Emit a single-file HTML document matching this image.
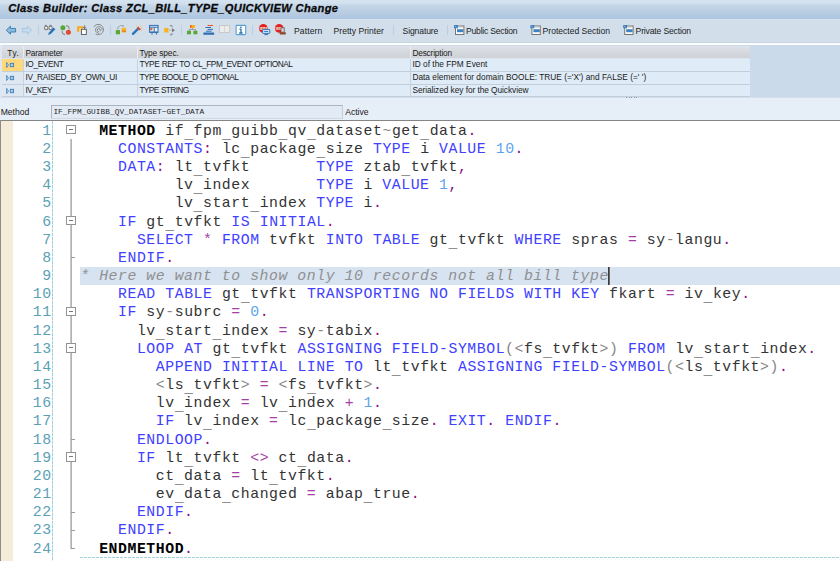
<!DOCTYPE html>
<html lang="en">
<head>
<meta charset="utf-8">
<title>Class Builder: Class ZCL_BILL_TYPE_QUICKVIEW Change</title>
<style>
*{box-sizing:border-box;margin:0;padding:0}
html,body{width:840px;height:561px;overflow:hidden;background:#e6eef7}
body{position:relative;font-family:"Liberation Sans",sans-serif;font-size:8.6px;color:#1a1a1a}
i{font-style:normal;display:block}
.abs{position:absolute}
#title{position:absolute;left:0;top:0;width:840px;height:19px;background:linear-gradient(#d6e4f1 0,#d1e0ee 18%,#c4d5e7 30%,#b7cce2 70%,#abc4de 100%)}
#title span{position:absolute;left:8.2px;top:0px;font:italic bold 11.1px/16px "Liberation Sans",sans-serif;color:#0a0a0a;white-space:nowrap;-webkit-text-stroke:0.3px #0a0a0a}
#tb{position:absolute;left:0;top:19px;width:840px;height:24px;background:#d2dfeb;border-top:1px solid #d9e4ef;border-bottom:1px solid #c8d5e3}
#tb2{position:absolute;left:0;top:43px;width:840px;height:3px;background:linear-gradient(#f4f8fc 0,#fdfeff 33%,#fdfeff 66%,#e3ebf4 67%,#d4e0ed 100%)}
.sep{position:absolute;top:25px;width:1px;height:10px;background:#bbcfe4}
.tl{position:absolute;top:24.6px;font-size:8.6px;line-height:12px;white-space:nowrap;color:#1c1c1c}
/* table */
#tbl{position:absolute;left:0;top:45px;width:840px;height:52px;background:#cbdaea}
#tbl::after{content:"";position:absolute;left:0;top:52px;width:840px;height:1px;background:#d3deea}
#tblL{position:absolute;left:0;top:45px;width:2px;height:52px;background:#dfe8f2}
.th,.td{position:absolute;white-space:nowrap;overflow:hidden;font-size:8.3px;color:#1a1a1a}
.th{top:1px;height:13px;line-height:13.4px;background:linear-gradient(#dfe2e6,#d3d7dc 60%,#cfd3d9);border-left:1px solid #e9edf1;border-bottom:1px solid #dde4ec}
.td{height:13px;line-height:11.2px;background:#dfebf6;border-left:1px solid #c6d2df;border-bottom:1px solid #c2cedc}
.td.c0{background:#dde8f3;border-left:0}
.th.c0{border-left:0}
.td.sel{background:#ffd87c}
.c0{left:2px;width:21.4px}.c1{left:23.4px;width:114px}.c2{left:137.4px;width:273px}.c3{left:410.4px;width:339.6px}
.c1 span,.c2 span,.c3 span{position:absolute;left:1.0px;top:0}
.td.c1 span,.td.c2 span{word-spacing:0.7px}
#h0{position:absolute;left:5.3px;top:0}
.th span{margin-top:1px}
.r1{top:14px}.r2{top:27px}.r3{top:40px;height:12px}
.ty{position:absolute;left:4.2px;top:2.2px;width:9px;height:8px}
#grip{position:absolute;left:626px;top:97.4px;width:13px;height:1px;background:repeating-linear-gradient(90deg,#8a96a4 0,#8a96a4 1px,transparent 1px,transparent 2.6px)}
/* method row */
#mlabel{position:absolute;left:0.7px;top:106px;font-size:8.6px;line-height:12px;white-space:nowrap}
#mfield{position:absolute;left:51px;top:105px;width:292px;height:13.6px;background:#e2ebf5;border:1px solid #aab4c0;border-right-color:#c4cdd8;border-bottom-color:#d0d8e2;font:7.8px/11.6px "Liberation Mono",monospace;color:#262626;white-space:nowrap}
#mfield span{position:absolute;left:1.4px;top:1.2px}
#mact{position:absolute;left:345.3px;top:106px;font-size:8.6px;line-height:12px;white-space:nowrap}
/* editor */
#ed{position:absolute;left:0;top:119.8px;width:840px;height:442px;background:#fff;border-top:1.1px solid #858585;overflow:hidden}
#edl{position:absolute;left:0;top:120px;width:1.1px;height:441px;background:#8c8c8c}
#marg{position:absolute;left:1.1px;top:121px;width:12.2px;height:440px;background:#f4ecd8}
#dot{position:absolute;left:52.1px;top:121px;width:1px;height:440px;background:repeating-linear-gradient(180deg,#a4d2d4 0,#a4d2d4 3px,#dceeef 3px,#dceeef 4px)}
#hdash{position:absolute;left:80px;top:557px;width:760px;height:1px;background:repeating-linear-gradient(90deg,#a2d2da 0,#a2d2da 3px,transparent 3px,transparent 4px)}
.ln{position:absolute;left:0;width:840px;height:18.17px;font-family:"Liberation Mono",monospace;font-size:14.80px;letter-spacing:0.559px;line-height:18.17px;white-space:pre;color:#333}
.ln .num{position:absolute;right:788.28px;top:0;color:#5aa1b6;text-align:right}
.ln .tx{position:absolute;left:80.28px;top:0}
.hlrow::before{content:"";position:absolute;left:80px;top:0;width:760px;height:100%;background:#d7e3f1}
.k{color:#4040ff}.p{color:#861086}.q{color:#a53ea5}.n{color:#5ba4ec}.o{color:#858585}.c{color:#909090;font-style:italic}
.ln b{color:#000;font-weight:bold}
.ln u{text-decoration:none;position:relative;top:3px;color:#3a3a3a}
.caret{position:absolute;left:608px;top:0;width:2px;height:18px;background:linear-gradient(90deg,#3a3a3a 0,#3a3a3a 50%,#6a6a6a 50%,#6a6a6a 100%)}
#fline{position:absolute;left:70px;top:139px;width:2px;height:410px;background:linear-gradient(90deg,#c9c9c9 0,#c9c9c9 50%,#b2b2b2 50%,#b2b2b2 100%)}
.fb{position:absolute;left:66.4px;width:9.4px;height:9.2px;border:1px solid #939393;background:#fff}
.fb::after{content:"";position:absolute;left:1.6px;top:3.1px;width:4.2px;height:1px;background:#777}
.fe{position:absolute;left:71px;width:4px;height:1px;background:#9a9a9a}
#ttext{letter-spacing:0.358px}
#t1{letter-spacing:0.097px}
#t2{letter-spacing:0.003px}
#t3{letter-spacing:-0.133px}
#t4{letter-spacing:-0.219px}
#t5{letter-spacing:-0.026px}
#t6{letter-spacing:-0.167px}
#h0{letter-spacing:0.516px}
#h1{letter-spacing:-0.159px}
#h2{letter-spacing:-0.083px}
#h3{letter-spacing:-0.174px}
#a1{letter-spacing:-0.368px}
#b1{letter-spacing:-0.270px}
#c1{letter-spacing:-0.377px}
#a2{letter-spacing:-0.461px}
#b2{letter-spacing:-0.469px}
#c2{letter-spacing:-0.621px}
#a3{letter-spacing:0.016px}
#b3{letter-spacing:0.020px}
#c3{letter-spacing:-0.047px}
#mlabel{letter-spacing:-0.029px}
#mfield span{letter-spacing:0.036px}
#mact{letter-spacing:-0.034px}
</style>
</head>
<body>
<div id="title"><span id="ttext">Class Builder: Class ZCL_BILL_TYPE_QUICKVIEW Change</span></div>
<div id="tb"></div>
<div id="tb2"></div>
<svg id="icons" class="abs" style="left:0;top:20px" width="840" height="24" viewBox="0 20 840 24">
<!-- back / forward -->
<path d="M6.3 30.2 L10.4 26.2 L10.4 28.4 L15.6 28.4 L15.6 32 L10.4 32 L10.4 34.2 Z" fill="#8fbcdc" stroke="#3b80b8" stroke-width="1" stroke-linejoin="round"/>
<path d="M31.6 30.2 L27.5 26.2 L27.5 28.4 L22.4 28.4 L22.4 32 L27.5 32 L27.5 34.2 Z" fill="#c9dcee" stroke="#9fc4e1" stroke-width="0.9" stroke-linejoin="round"/>
<!-- glasses + pencil -->
<g fill="none" stroke="#7d7d7d" stroke-width="1.1"><circle cx="46.2" cy="27.9" r="1.7" fill="#f6f6f6"/><circle cx="50.6" cy="27.9" r="1.7" fill="#f6f6f6"/><path d="M44.8 26 Q45.6 24.8 46.8 25.4 M49.4 25.4 Q50.6 24.8 51.6 26"/></g>
<path d="M48 35 L49 32.4 L53.6 27.6 L55.4 29.2 L50.8 34 Z" fill="#2f74b8"/>
<!-- green/red circles -->
<g fill="none" stroke="#8f8f8f" stroke-width="1.1"><path d="M66 25.6 Q69.4 26 69.2 29.4"/><path d="M65.2 34.6 Q62 34.2 62 30.8"/></g>
<circle cx="62.9" cy="27.8" r="2.5" fill="#5aa834"/><circle cx="68.4" cy="32.2" r="2.5" fill="#e04a32"/>
<!-- copy boxes -->
<path d="M77.1 26.2 H83.4 V28.4 H79.4 V31.8 H77.1 Z" fill="#f8a91e"/><rect x="79.4" y="28.4" width="2" height="3.4" fill="#fbd490"/>
<rect x="81.4" y="29.3" width="4.9" height="5.2" fill="#fff" stroke="#555" stroke-width="0.9"/>
<path d="M84.6 25.2 V28.6 M83.2 27 L84.6 28.6 L86.2 27" fill="none" stroke="#666" stroke-width="0.8"/>
<!-- spiral -->
<g fill="none" stroke="#858585" stroke-width="0.95"><path d="M93.8 27 A5.2 5.2 0 1 1 95.6 34"/><path d="M99.4 33.2 A3.3 3.3 0 1 1 102.1 30.4"/><path d="M98.8 31.6 A1.5 1.5 0 1 1 100.3 30.2 L100.3 31.4"/></g>
<!-- class relation -->
<rect x="115.8" y="30.1" width="4.2" height="4.2" fill="#5aa834"/>
<rect x="121.7" y="27.9" width="4.4" height="4.6" fill="#f9b21c"/><rect x="122.3" y="30.6" width="1.2" height="1.2" fill="#e04a32"/><rect x="124.4" y="30.6" width="1.2" height="1.2" fill="#e04a32"/>
<path d="M117.8 29.6 V27.4 L120.6 25.6 H123.4 V27.2" fill="none" stroke="#8a8a8a" stroke-width="0.7"/>
<!-- wand -->
<path d="M133 33.8 L138.2 28.6" stroke="#2f74b8" stroke-width="2.4" stroke-linecap="round"/>
<path d="M138.2 26.6 L141 29.2 L139.6 30.6 L136.8 28 Z" fill="#e04a32"/>
<path d="M136.4 25.4 L137.6 26.4 M141.2 25.2 L140.4 26.6 M142.4 28.2 L141 28.4 M141 30.6 L142 31.2" stroke="#f6c14b" stroke-width="0.9"/>
<!-- blue table -->
<g><rect x="149.6" y="25.4" width="8.4" height="6.6" fill="#e8f0f8" stroke="#2f6fb0" stroke-width="1"/><path d="M149.2 27.2 H158.4 M154.2 27.2 V32 M152 32 V34.6 M156.4 32 V34.6 M149.4 32.4 H158.4" stroke="#2f6fb0" stroke-width="1" fill="none"/><rect x="150.2" y="28.2" width="2.2" height="2" fill="#e04a32"/></g>
<!-- orange box with arrow -->
<rect x="164.2" y="27.9" width="4.2" height="4.6" fill="#f9b21c"/>
<path d="M168.6 30.2 H172" stroke="#c8c8c8" stroke-width="1.8"/><path d="M172 28.2 L175 30.2 L172 32.2 Z" fill="#777"/>
<path d="M169.8 25.6 H172 V27.4 M169.8 34.8 H172 V33" fill="none" stroke="#777" stroke-width="0.8"/>
<!-- hierarchy -->
<rect x="190" y="25" width="5" height="3" fill="#f9b21c"/><rect x="190" y="25" width="1.4" height="3" fill="#ee5a2a"/>
<path d="M192.5 28 V29.6 M189 30.8 V29.6 H195.6 V30.8" fill="none" stroke="#8a8a8a" stroke-width="0.8"/>
<rect x="187" y="30.8" width="4" height="3.5" fill="#5aa834"/><rect x="193.4" y="30.8" width="4" height="3.5" fill="#5aa834"/>
<!-- indent lines -->
<path d="M207.6 25.5 H213" stroke="#ee5a2a" stroke-width="1.1"/>
<path d="M205.4 27.5 H211 M207.6 29.4 H213 M206 31.2 H211.6" stroke="#2f6fb0" stroke-width="1"/>
<rect x="203.3" y="32.4" width="10.9" height="2.4" rx="0.6" fill="#2f6fb0"/>
<!-- grey book -->
<rect x="219.5" y="25.6" width="10.2" height="6.9" fill="#ececec" stroke="#c2c2c2" stroke-width="0.8"/><path d="M224.6 25.8 V32.4" stroke="#cdcdcd" stroke-width="0.8"/>
<!-- info -->
<rect x="236.1" y="25.4" width="9.6" height="9.2" rx="0.8" fill="#fff" stroke="#5a9fd0" stroke-width="1.1"/>
<path d="M241 29 V32.8 M239.4 29.2 H241 M239.2 33 H242.6" stroke="#2a73b0" stroke-width="1.3" fill="none"/><rect x="240.2" y="26.6" width="1.5" height="1.5" fill="#2a73b0"/>
<!-- red + monitor -->
<circle cx="263.3" cy="28.4" r="4.3" fill="#e32020"/><rect x="259.8" y="27" width="7" height="2.8" fill="#f7d9d2"/><path d="M260.8 29.6 V27.2 M262.4 29.6 V27.2 M264 29.6 V27.2 M265.6 29.6 V27.2" stroke="#d24a3a" stroke-width="0.7"/>
<rect x="262.6" y="29.4" width="7.2" height="4" rx="0.6" fill="#d6e8f7" stroke="#2f74b8" stroke-width="1"/><path d="M264.2 31.4 H268.2" stroke="#2f74b8" stroke-width="1"/><path d="M264.4 34.6 H268" stroke="#2f74b8" stroke-width="1"/>
<!-- red + stamp -->
<circle cx="279.2" cy="28.4" r="4.3" fill="#e32020"/><rect x="275.7" y="27" width="6" height="2.8" fill="#f7d9d2"/><path d="M276.7 29.6 V27.2 M278.3 29.6 V27.2 M279.9 29.6 V27.2" stroke="#d24a3a" stroke-width="0.7"/>
<rect x="281" y="27.8" width="3.2" height="4.4" fill="#d9d9d9" stroke="#555" stroke-width="0.8"/><rect x="279.6" y="32.2" width="6.2" height="2.4" rx="0.5" fill="#8a4a2a"/>
<!-- section icons -->
<g><rect x="455.5" y="26" width="8.4" height="8.5" fill="#fdfdfd" stroke="#747474" stroke-width="1"/><rect x="454" y="25" width="3.9" height="3.3" fill="#3b7fbd"/><rect x="457" y="29.2" width="6.4" height="3" fill="#3f82c0"/><path d="M458.4 27.4 H462.6" stroke="#c9c9c9" stroke-width="0.7"/><path d="M454.8 25.8 L456.4 27.2" stroke="#d6e6f4" stroke-width="0.6"/></g>
<g transform="translate(76.4 0)"><rect x="455.5" y="26" width="8.4" height="8.5" fill="#fdfdfd" stroke="#747474" stroke-width="1"/><rect x="454" y="25" width="3.9" height="3.3" fill="#3b7fbd"/><rect x="457" y="29.2" width="6.4" height="3" fill="#3f82c0"/><path d="M458.4 27.4 H462.6" stroke="#c9c9c9" stroke-width="0.7"/><path d="M454.8 25.8 L456.4 27.2" stroke="#d6e6f4" stroke-width="0.6"/></g>
<g transform="translate(169.2 0)"><rect x="455.5" y="26" width="8.4" height="8.5" fill="#fdfdfd" stroke="#747474" stroke-width="1"/><rect x="454" y="25" width="3.9" height="3.3" fill="#3b7fbd"/><rect x="457" y="29.2" width="6.4" height="3" fill="#3f82c0"/><path d="M458.4 27.4 H462.6" stroke="#c9c9c9" stroke-width="0.7"/><path d="M454.8 25.8 L456.4 27.2" stroke="#d6e6f4" stroke-width="0.6"/></g>
</svg>

<i class="sep" style="left:37.8px"></i>
<i class="sep" style="left:109.8px"></i>
<i class="sep" style="left:180.8px"></i>
<i class="sep" style="left:252.4px"></i>
<i class="sep" style="left:393px"></i>
<i class="sep" style="left:446.8px"></i>
<span class="tl" id="t1" style="left:294px">Pattern</span>
<span class="tl" id="t2" style="left:333.6px">Pretty Printer</span>
<span class="tl" id="t3" style="left:402.6px">Signature</span>
<span class="tl" id="t4" style="left:466px">Public Section</span>
<span class="tl" id="t5" style="left:542.6px">Protected Section</span>
<span class="tl" id="t6" style="left:635.6px">Private Section</span>

<div id="tbl">
  <div class="th c0"><span id="h0">Ty.</span></div><div class="th c1"><span id="h1">Parameter</span></div><div class="th c2"><span id="h2">Type spec.</span></div><div class="th c3"><span id="h3">Description</span></div>
  <div class="td c0 r1 sel"><svg class="ty" viewBox="0 0 9 8"><path d="M0.6 1.4 L2.5 4 L0.6 6.6 Z" fill="#c9def0" stroke="#3b80b8" stroke-width="0.8"/><rect x="4.3" y="2.3" width="3.3" height="3.4" fill="#a6c9e5" stroke="#3b80b8" stroke-width="0.9"/></svg></div><div class="td c1 r1"><span id="a1">IO_EVENT</span></div><div class="td c2 r1"><span id="a2">TYPE REF TO CL_FPM_EVENT OPTIONAL</span></div><div class="td c3 r1"><span id="a3">ID of the FPM Event</span></div>
  <div class="td c0 r2"><svg class="ty" viewBox="0 0 9 8"><path d="M0.6 1.4 L2.5 4 L0.6 6.6 Z" fill="#c9def0" stroke="#3b80b8" stroke-width="0.8"/><rect x="4.3" y="2.3" width="3.3" height="3.4" fill="#a6c9e5" stroke="#3b80b8" stroke-width="0.9"/></svg></div><div class="td c1 r2"><span id="b1">IV_RAISED_BY_OWN_UI</span></div><div class="td c2 r2"><span id="b2">TYPE BOOLE_D OPTIONAL</span></div><div class="td c3 r2"><span id="b3">Data element for domain BOOLE: TRUE (='X') and FALSE (=' ')</span></div>
  <div class="td c0 r3"><svg class="ty" viewBox="0 0 9 8"><path d="M0.6 1.4 L2.5 4 L0.6 6.6 Z" fill="#c9def0" stroke="#3b80b8" stroke-width="0.8"/><rect x="4.3" y="2.3" width="3.3" height="3.4" fill="#a6c9e5" stroke="#3b80b8" stroke-width="0.9"/></svg></div><div class="td c1 r3"><span id="c1">IV_KEY</span></div><div class="td c2 r3"><span id="c2">TYPE STRING</span></div><div class="td c3 r3"><span id="c3">Serialized key for the Quickview</span></div>
</div>
<i id="tblL"></i>
<i id="grip"></i>
<span id="mlabel">Method</span>
<div id="mfield"><span>IF_FPM_GUIBB_QV_DATASET~GET_DATA</span></div>
<span id="mact">Active</span>

<div id="ed"></div>
<i id="edl"></i>
<i id="marg"></i>
<i id="dot"></i>
<i id="fline"></i>
<i id="hdash"></i>
<div class="ln" style="top:121.70px"><span class="num">1</span><span class="tx">  <b>METHOD</b> if<u>_</u>fpm<u>_</u>guibb<u>_</u>qv<u>_</u>dataset<span class="o">~</span>get<u>_</u>data<span class="p">.</span></span></div>
<div class="ln" style="top:139.87px"><span class="num">2</span><span class="tx">    <span class="k">CONSTANTS</span><span class="p">:</span> lc<u>_</u>package<u>_</u>size <span class="k">TYPE</span> i <span class="k">VALUE</span> <span class="n">10</span><span class="p">.</span></span></div>
<div class="ln" style="top:158.04px"><span class="num">3</span><span class="tx">    <span class="k">DATA</span><span class="p">:</span> lt<u>_</u>tvfkt       <span class="k">TYPE</span> ztab<u>_</u>tvfkt<span class="p">,</span></span></div>
<div class="ln" style="top:176.21px"><span class="num">4</span><span class="tx">          lv<u>_</u>index       <span class="k">TYPE</span> i <span class="k">VALUE</span> <span class="n">1</span><span class="p">,</span></span></div>
<div class="ln" style="top:194.38px"><span class="num">5</span><span class="tx">          lv<u>_</u>start<u>_</u>index <span class="k">TYPE</span> i<span class="p">.</span></span></div>
<div class="ln" style="top:212.55px"><span class="num">6</span><span class="tx">    <span class="k">IF</span> gt<u>_</u>tvfkt <span class="k">IS</span> <span class="k">INITIAL</span><span class="p">.</span></span></div>
<div class="ln" style="top:230.72px"><span class="num">7</span><span class="tx">      <span class="k">SELECT</span> <span class="q">*</span> <span class="k">FROM</span> tvfkt <span class="k">INTO</span> <span class="k">TABLE</span> gt<u>_</u>tvfkt <span class="k">WHERE</span> spras <span class="q">=</span> sy<span class="o">-</span>langu<span class="p">.</span></span></div>
<div class="ln" style="top:248.89px"><span class="num">8</span><span class="tx">    <span class="k">ENDIF</span><span class="p">.</span></span></div>
<div class="ln hlrow" style="top:267.06px"><span class="num">9</span><span class="tx"><span class="c">* Here we want to show only 10 records not all bill type</span></span><i class="caret"></i></div>
<div class="ln" style="top:285.23px"><span class="num">10</span><span class="tx">    <span class="k">READ</span> <span class="k">TABLE</span> gt<u>_</u>tvfkt <span class="k">TRANSPORTING</span> <span class="k">NO</span> <span class="k">FIELDS</span> <span class="k">WITH</span> <span class="k">KEY</span> fkart <span class="q">=</span> iv<u>_</u>key<span class="p">.</span></span></div>
<div class="ln" style="top:303.40px"><span class="num">11</span><span class="tx">    <span class="k">IF</span> sy<span class="o">-</span>subrc <span class="q">=</span> <span class="n">0</span><span class="p">.</span></span></div>
<div class="ln" style="top:321.57px"><span class="num">12</span><span class="tx">      lv<u>_</u>start<u>_</u>index <span class="q">=</span> sy<span class="o">-</span>tabix<span class="p">.</span></span></div>
<div class="ln" style="top:339.74px"><span class="num">13</span><span class="tx">      <span class="k">LOOP</span> <span class="k">AT</span> gt<u>_</u>tvfkt <span class="k">ASSIGNING</span> <span class="k">FIELD-SYMBOL</span><span class="o">(</span><span class="o">&lt;</span>fs<u>_</u>tvfkt<span class="o">&gt;</span><span class="o">)</span> <span class="k">FROM</span> lv<u>_</u>start<u>_</u>index<span class="p">.</span></span></div>
<div class="ln" style="top:357.91px"><span class="num">14</span><span class="tx">        <span class="k">APPEND</span> <span class="k">INITIAL</span> <span class="k">LINE</span> <span class="k">TO</span> lt<u>_</u>tvfkt <span class="k">ASSIGNING</span> <span class="k">FIELD-SYMBOL</span><span class="o">(</span><span class="o">&lt;</span>ls<u>_</u>tvfkt<span class="o">&gt;</span><span class="o">)</span><span class="p">.</span></span></div>
<div class="ln" style="top:376.08px"><span class="num">15</span><span class="tx">        <span class="o">&lt;</span>ls<u>_</u>tvfkt<span class="o">&gt;</span> <span class="q">=</span> <span class="o">&lt;</span>fs<u>_</u>tvfkt<span class="o">&gt;</span><span class="p">.</span></span></div>
<div class="ln" style="top:394.25px"><span class="num">16</span><span class="tx">        lv<u>_</u>index <span class="q">=</span> lv<u>_</u>index <span class="q">+</span> <span class="n">1</span><span class="p">.</span></span></div>
<div class="ln" style="top:412.42px"><span class="num">17</span><span class="tx">        <span class="k">IF</span> lv<u>_</u>index <span class="q">=</span> lc<u>_</u>package<u>_</u>size<span class="p">.</span> <span class="k">EXIT</span><span class="p">.</span> <span class="k">ENDIF</span><span class="p">.</span></span></div>
<div class="ln" style="top:430.59px"><span class="num">18</span><span class="tx">      <span class="k">ENDLOOP</span><span class="p">.</span></span></div>
<div class="ln" style="top:448.76px"><span class="num">19</span><span class="tx">      <span class="k">IF</span> lt<u>_</u>tvfkt <span class="q">&lt;&gt;</span> ct<u>_</u>data<span class="p">.</span></span></div>
<div class="ln" style="top:466.93px"><span class="num">20</span><span class="tx">        ct<u>_</u>data <span class="q">=</span> lt<u>_</u>tvfkt<span class="p">.</span></span></div>
<div class="ln" style="top:485.10px"><span class="num">21</span><span class="tx">        ev<u>_</u>data<u>_</u>changed <span class="q">=</span> abap<u>_</u>true<span class="p">.</span></span></div>
<div class="ln" style="top:503.27px"><span class="num">22</span><span class="tx">      <span class="k">ENDIF</span><span class="p">.</span></span></div>
<div class="ln" style="top:521.44px"><span class="num">23</span><span class="tx">    <span class="k">ENDIF</span><span class="p">.</span></span></div>
<div class="ln" style="top:539.61px"><span class="num">24</span><span class="tx">  <b>ENDMETHOD</b><span class="p">.</span></span></div>
<i class="fb" style="top:125.28px"></i>
<i class="fb" style="top:216.14px"></i>
<i class="fb" style="top:306.99px"></i>
<i class="fb" style="top:343.32px"></i>
<i class="fb" style="top:452.35px"></i>
<i class="fe" style="top:257.28px"></i>
<i class="fe" style="top:438.98px"></i>
<i class="fe" style="top:511.66px"></i>
<i class="fe" style="top:529.83px"></i>
<i class="fe" style="top:548.00px"></i>
</body>
</html>
